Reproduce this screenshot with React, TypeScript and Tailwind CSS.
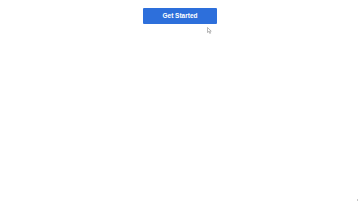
export default function App() {
    return (
        <div className="relative w-[360px] h-[202px] bg-white overflow-hidden">
            <div className="flex justify-center pt-2">
                <button
                    className="w-[74px] h-4 flex items-center justify-center rounded-[1px] bg-[#2d6fdb] text-white text-[6.5px] font-bold leading-none"
                    style={{ fontFamily: '"Liberation Sans", Arial, sans-serif' }}
                >
                    Get Started
                </button>
            </div>
            {/* mouse pointer */}
            <svg className="absolute left-[207px] top-[27px]" width="5" height="7" viewBox="0 0 10 14">
                <path d="M1 1 L1 11 L3.5 8.8 L5.5 13 L7 12.3 L5.2 8.3 L8.5 8.3 Z" fill="#ffffff" stroke="#8a8a8a" strokeWidth="1.2" strokeLinejoin="round" />
            </svg>
            <div className="absolute left-[357px] top-[199px] w-[1px] h-[2px] bg-[#c8c8c8]" />
        </div>
    );
}
